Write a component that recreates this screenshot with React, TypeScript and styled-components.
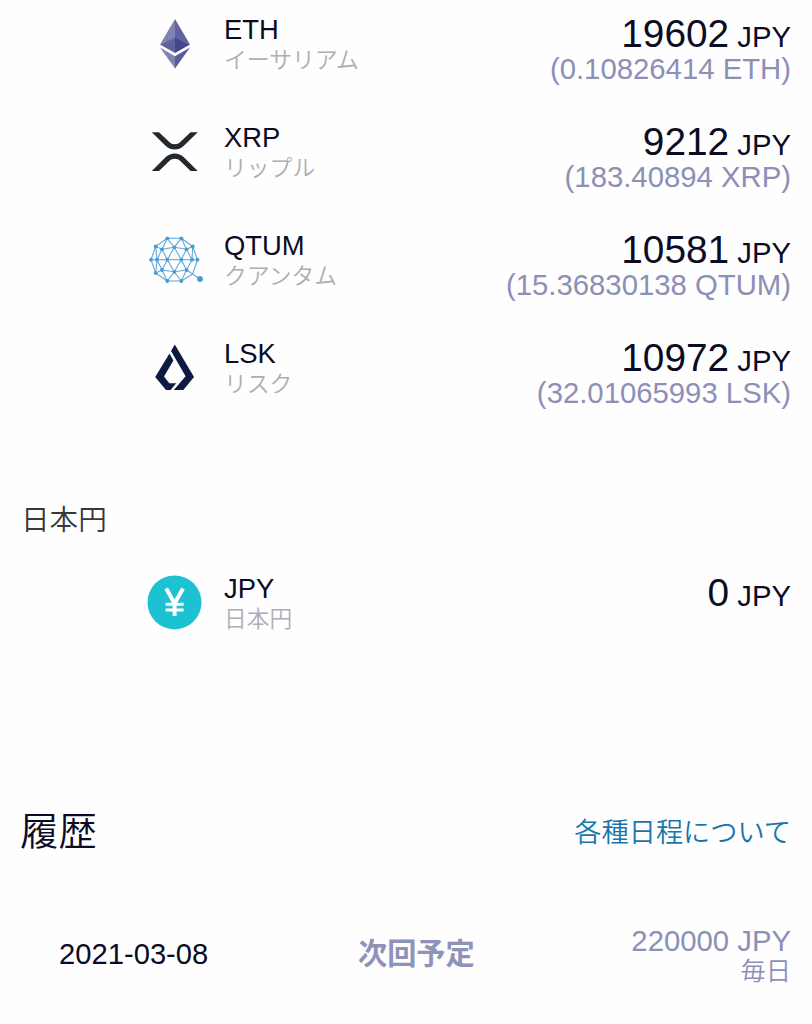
import React from "react";
import styled, { createGlobalStyle } from "styled-components";

const GlobalStyle = createGlobalStyle`
  body {
    margin: 0;
    background: #fefefe;
    font-family: "Liberation Sans", "Noto Sans CJK JP", sans-serif;
    color: #0b0c24;
  }
`;

const Page = styled.main`
  box-sizing: border-box;
  width: 812px;
  height: 1024px;
  padding: 15px 21px 0;
  overflow: hidden;
`;

const AssetList = styled.ul`
  list-style: none;
  margin: 0;
  padding: 0;
`;

const AssetRow = styled.li`
  display: flex;
  align-items: flex-start;
  height: 108px;
  padding-left: 126px;
`;

const IconSlot = styled.div`
  flex: none;
  width: 56px;
  height: 56px;
  padding-top: 1px;
  svg {
    display: block;
  }
`;

const Names = styled.div`
  flex: 1;
  padding-left: 21px;
`;

const Symbol = styled.div`
  font-size: 27.4px;
  line-height: 30px;
`;

const Caption = styled.div`
  font-family: "Noto Sans CJK JP", sans-serif;
  font-weight: 350;
  font-size: 22.8px;
  line-height: 28px;
  color: #adaeb5;
`;

const Values = styled.div`
  text-align: right;
  white-space: nowrap;
`;

const Amount = styled.div`
  height: 37px;
  font-size: 38.8px;
  line-height: 37px;
  small {
    font-size: 29.3px;
  }
`;

const Unit = styled.div`
  font-size: 29.3px;
  line-height: 30px;
  color: #8c90b6;
`;

const Holding = styled(Unit)`
  margin-top: 2px;
`;

const SectionTitle = styled.h3`
  margin: 54px 0 0;
  font-family: "Noto Sans CJK JP", sans-serif;
  font-weight: 350;
  font-size: 28.6px;
  line-height: 34px;
  color: #383838;
`;

const FiatList = styled(AssetList)`
  padding-top: 39px;
`;

const HistoryHeader = styled.header`
  display: flex;
  justify-content: space-between;
  align-items: center;
  height: 50px;
  margin-top: 122px;
`;

const HistoryTitle = styled.h2`
  margin: -2px 0 0 -1px;
  font-family: "Noto Sans CJK JP", sans-serif;
  font-weight: 350;
  font-size: 38.4px;
  line-height: 50px;
`;

const ScheduleLink = styled.a`
  margin-top: 2px;
  font-family: "Noto Sans CJK JP", sans-serif;
  font-weight: 350;
  font-size: 27.2px;
  line-height: 36px;
  color: #1975a9;
`;

const HistoryRow = styled.div`
  display: grid;
  grid-template-columns: 299px 155px 1fr;
  align-items: center;
  height: 64px;
  margin-top: 68px;
  padding-left: 38px;
`;

const EntryDate = styled.time`
  font-size: 29.2px;
`;

const EntryStatus = styled.strong`
  margin-top: -7px;
  font-family: "Noto Sans CJK JP", sans-serif;
  font-weight: 700;
  font-size: 29.2px;
  line-height: 40px;
  color: #8f93b8;
`;

const Frequency = styled.div`
  font-family: "Noto Sans CJK JP", sans-serif;
  font-weight: 350;
  font-size: 25.3px;
  line-height: 27px;
  color: #8c90b6;
`;

const EthIcon = () => (
  <svg width="56" height="56" viewBox="0 0 56 56">
    <path d="M28 3 13 28.5 28 22Z" fill="#8083b2" />
    <path d="M28 3 43 28.5 28 22Z" fill="#6163a0" />
    <path d="M13 28.5 28 21.5V37Z" fill="#6062a0" />
    <path d="M43 28.5 28 21.5V37Z" fill="#454788" />
    <path d="M13 31.5 28 40.3V52.5Z" fill="#8083b2" />
    <path d="M43 31.5 28 40.3V52.5Z" fill="#595b9a" />
  </svg>
);

const XrpIcon = () => (
  <svg width="56" height="56" viewBox="0 0 56 56" fill="#23292f">
    <path d="M4.8 8.2h7.2L22.3 18.1c3 2.9 8 2.9 11 0L43.6 8.2h7.2L36.6 22c-4.9 4.7-12.9 4.7-17.8 0Z" />
    <path d="M12 47H4.8L18.8 33c4.9-4.8 12.9-4.8 17.8 0l14.2 14h-7.2L33.3 36.9c-3-2.9-8-2.9-11 0Z" />
  </svg>
);

const qtumNodes = [
  [20.3, 6.3], [34.3, 6.3], [8.7, 14.5], [45.7, 14.5], [15, 17.3], [27.3, 15.3],
  [39.5, 17.3], [4, 27.7], [10, 27.7], [20.3, 27.7], [34.3, 27.7], [45, 27.7],
  [50.5, 27.7], [8.7, 41], [15, 38], [27.3, 39.8], [39.5, 38], [20.3, 49], [34.3, 49],
];
const qtumEdges = [
  [0, 1], [0, 2], [0, 4], [0, 5], [1, 5], [1, 6], [1, 3], [2, 4], [4, 5], [5, 6],
  [3, 6], [2, 7], [2, 8], [4, 8], [4, 9], [5, 9], [5, 10], [6, 10], [6, 11], [3, 11],
  [3, 12], [7, 8], [8, 9], [9, 10], [10, 11], [11, 12], [7, 13], [8, 13], [8, 14],
  [9, 14], [9, 15], [10, 15], [10, 16], [11, 16], [13, 14], [14, 15], [15, 16],
  [13, 17], [14, 17], [15, 17], [15, 18], [16, 18], [17, 18],
];

const QtumIcon = () => (
  <svg width="56" height="56" viewBox="0 0 56 56">
    <g stroke="#66a9d8" strokeWidth="1.1">
      {qtumEdges.map(([a, b]) => (
        <line
          key={`${a}-${b}`}
          x1={qtumNodes[a][0]}
          y1={qtumNodes[a][1]}
          x2={qtumNodes[b][0]}
          y2={qtumNodes[b][1]}
        />
      ))}
      <path d="M39.5 38 53 47M50.5 27.7 45.7 42M34.3 49 45.7 42" fill="none" />
    </g>
    <g fill="#4a9bd2">
      {qtumNodes.map(([x, y]) => (
        <circle key={`${x}-${y}`} cx={x} cy={y} r="1.9" />
      ))}
      <circle cx="53" cy="47" r="2.9" />
    </g>
  </svg>
);

const LskIcon = () => (
  <svg width="56" height="56" viewBox="0 0 56 56" fill="#0c1a3f">
    <path d="M27.8 4.4 47 37 36.3 50H26.8L38.6 36.3 24 11Z" />
    <path d="M22.5 13.6 26.4 20.6 17 36.4 22.3 43.2H29.2L23.6 50H19L8.2 37Z" />
  </svg>
);

const YenIcon = () => (
  <svg width="56" height="56" viewBox="0 0 56 56">
    <circle cx="27.5" cy="27.4" r="27" fill="#1dc2d2" />
    <g fill="none" stroke="#fff">
      <path d="M19.2 13.5 27.6 28.4 36 13.5M27.6 27V41" strokeWidth="4" />
      <path d="M18.6 29.3H36.6M18.6 35H36.6" strokeWidth="3" />
    </g>
  </svg>
);

type Asset = {
  symbol: string;
  name: string;
  amount: string;
  holding?: string;
  icon: React.ReactNode;
};

const cryptoAssets: Asset[] = [
  { symbol: "ETH", name: "イーサリアム", amount: "19602", holding: "0.10826414", icon: <EthIcon /> },
  { symbol: "XRP", name: "リップル", amount: "9212", holding: "183.40894", icon: <XrpIcon /> },
  { symbol: "QTUM", name: "クアンタム", amount: "10581", holding: "15.36830138", icon: <QtumIcon /> },
  { symbol: "LSK", name: "リスク", amount: "10972", holding: "32.01065993", icon: <LskIcon /> },
];

const fiatAssets: Asset[] = [
  { symbol: "JPY", name: "日本円", amount: "0", icon: <YenIcon /> },
];

const AssetItem = ({ asset }: { asset: Asset }) => (
  <AssetRow>
    <IconSlot>{asset.icon}</IconSlot>
    <Names>
      <Symbol>{asset.symbol}</Symbol>
      <Caption>{asset.name}</Caption>
    </Names>
    <Values>
      <Amount>
        {asset.amount}
        <small> JPY</small>
      </Amount>
      {asset.holding && (
        <Holding>
          ({asset.holding} {asset.symbol})
        </Holding>
      )}
    </Values>
  </AssetRow>
);

export default function App() {
  return (
    <>
      <GlobalStyle />
      <Page>
        <AssetList>
          {cryptoAssets.map((asset) => (
            <AssetItem key={asset.symbol} asset={asset} />
          ))}
        </AssetList>
        <SectionTitle>日本円</SectionTitle>
        <FiatList>
          {fiatAssets.map((asset) => (
            <AssetItem key={asset.symbol} asset={asset} />
          ))}
        </FiatList>
        <HistoryHeader>
          <HistoryTitle>履歴</HistoryTitle>
          <ScheduleLink>各種日程について</ScheduleLink>
        </HistoryHeader>
        <HistoryRow>
          <EntryDate>2021-03-08</EntryDate>
          <EntryStatus>次回予定</EntryStatus>
          <Values>
            <Unit>220000 JPY</Unit>
            <Frequency>毎日</Frequency>
          </Values>
        </HistoryRow>
      </Page>
    </>
  );
}
